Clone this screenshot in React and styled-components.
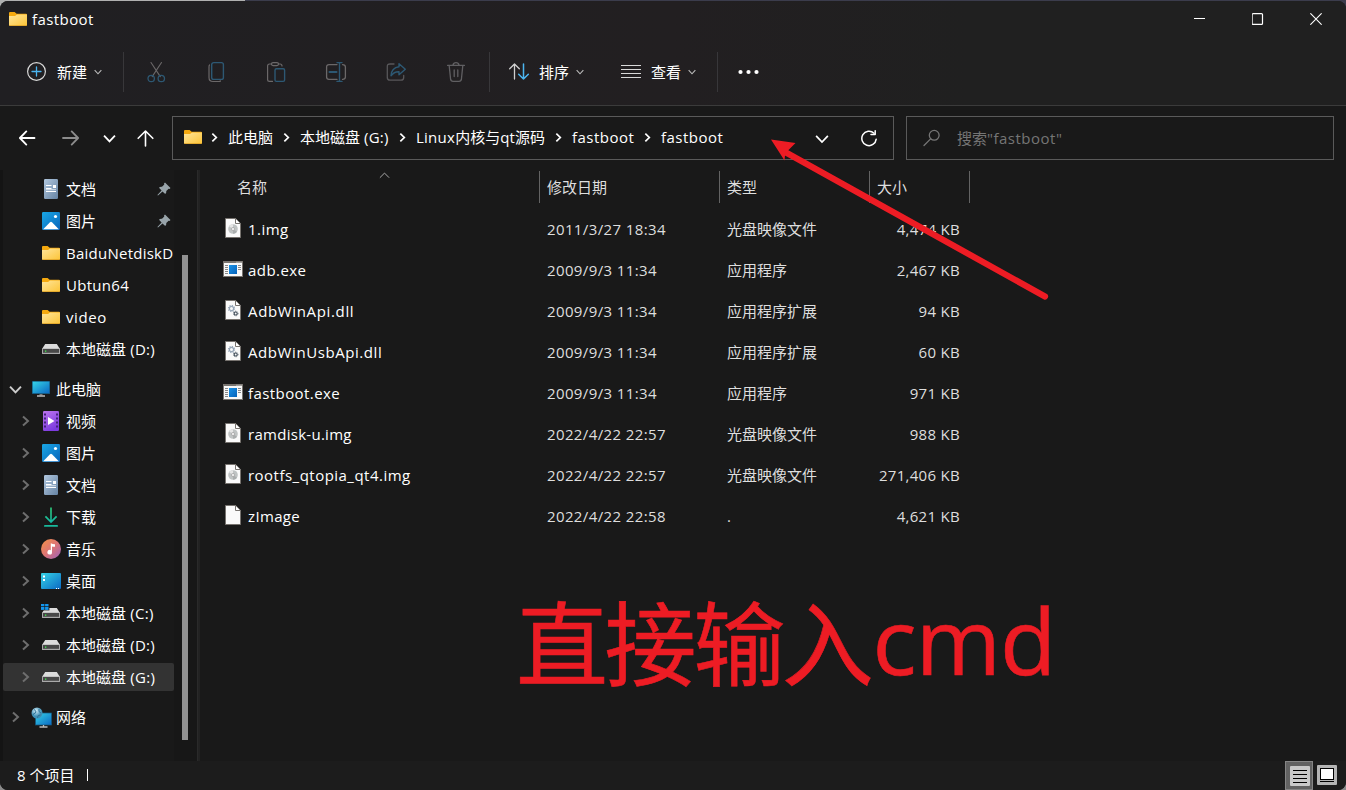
import React from "react";
import styled, { createGlobalStyle } from "styled-components";

const Global = createGlobalStyle`
  *{box-sizing:border-box}
  html,body{margin:0;padding:0;overflow:hidden;background:#191919}
  svg{display:block;flex:none}
`;

const Desktop = styled.div`
  width:1346px;height:790px;overflow:hidden;padding-top:1px;
  background:linear-gradient(#b0b0b0,#b0b0b0) 0 0/245px 12px no-repeat,
    linear-gradient(#3b3c4c,#3b3c4c) 0 0/100% 12px no-repeat,#8a8a8a;
  font-family:"Open Sans","Noto Sans","Noto Sans CJK SC",sans-serif;
  font-size:15px;line-height:20px;color:#fff;
`;
const Window = styled.div`
  position:relative;display:flex;flex-direction:column;
  width:1346px;height:789px;border-radius:8px;overflow:hidden;background:#191919;
`;
const Top = styled.header`
  height:105px;border-bottom:1px solid #3b3b3b;
  background:linear-gradient(90deg,#201f22,#221f21 50%,#202020 72%);
`;
const TitleBar = styled.div`display:flex;align-items:center;height:36px;padding:0 1px 0 9px;`;
const Title = styled.div`flex:1;padding-left:5px;`;
const CaptionButton = styled.div`width:58px;height:36px;display:grid;place-items:center;`;
const Toolbar = styled.div`display:flex;align-items:center;height:69px;`;
const Tool = styled.div`
  display:flex;align-items:center;gap:${p => p.$gap || 0}px;width:${p => p.$w}px;
  padding-left:${p => p.$pl || 0}px;height:40px;
`;
const ToolSep = styled.div`width:1px;height:40px;background:#38373a;`;

const NavBar = styled.div`display:flex;height:64px;padding:10px 12px 10px 0;flex:none;`;
const NavButtons = styled.div`display:flex;width:172px;height:44px;align-items:center;`;
const NavButton = styled.div`width:${p => p.$w}px;padding-left:${p => p.$pl}px;`;
const AddressBox = styled.div`
  display:flex;align-items:center;width:722px;height:44px;border:1px solid #5a5a5a;padding:0 0 2px 11px;
`;
const Crumb = styled.div`width:${p => p.$w}px;white-space:nowrap;`;
const CrumbArrow = styled.div`width:26px;display:flex;justify-content:center;padding-right:1px;`;
const AddressTools = styled.div`display:flex;align-items:center;gap:32px;margin-left:auto;padding:4px 15px 0 0;`;
const SearchBox = styled.div`
  display:flex;align-items:center;gap:16px;flex:1;margin-left:12px;height:44px;border:1px solid #5a5a5a;
  padding:0 0 1px 16px;color:#757575;
`;

const Body = styled.div`display:flex;height:591px;flex:none;`;
const Side = styled.nav`width:197px;border-left:3px solid #141414;display:flex;background:#191919;`;
const Tree = styled.div`display:flex;flex-direction:column;width:171px;padding-top:3px;overflow:hidden;`;
const TreeRow = styled.div`
  display:flex;flex:none;align-items:center;height:28px;margin:2px 0 ${p => (p.$gap ? 10 : 2)}px;
  padding-left:${p => (p.$root ? 6 : 16)}px;white-space:nowrap;border-radius:2px;
  background:${p => (p.$selected ? "#333333" : "transparent")};
`;
const Twist = styled.div`width:21px;height:16px;display:flex;align-items:center;`;
const TreeIcon = styled.div`width:22px;height:22px;display:grid;place-items:center;`;
const TreeLabel = styled.div`flex:1;padding:0 0 1px 4px;`;
const Pin = styled.div`width:17px;`;
const ScrollTrack = styled.div`width:23px;padding:85px 0 0 8px;background:#171717;`;
const Thumb = styled.div`width:6px;height:485px;background:#929292;`;
const Splitter = styled.div`width:3px;background:#222222;border-left:1px solid #2a2a2a;`;

const List = styled.main`flex:1;padding:1px 0 0 21px;`;
const HeaderRow = styled.div`display:flex;height:32px;`;
const HeaderCell = styled.div`
  position:relative;width:${p => p.$w}px;border-right:1px solid #636363;padding:6px 0 0 ${p => p.$pl || 7}px;color:#dedede;
`;
const SortMark = styled.div`position:absolute;left:158px;top:-1px;`;
const FileRow = styled.div`display:flex;align-items:center;height:41px;color:#dedede;`;
const FileIcon = styled.div`width:27px;height:24px;display:flex;align-items:center;padding:0 0 2px ${p => (p.$wide ? 2 : 4)}px;`;
const FileName = styled.div`width:299px;color:#fff;`;
const FileCell = styled.div`width:${p => p.$w}px;text-align:${p => (p.$right ? "right" : "left")};`;
const Files = styled.div`padding-top:5px;`;

const Status = styled.footer`
  display:flex;align-items:center;height:29px;background:#1c1c1c;padding:0 0 0 17px;
`;
const StatusText = styled.div`padding-bottom:2px;`;
const StatusSep = styled.div`width:1px;height:12px;background:#fff;margin:0 0 1px 13px;`;
const ViewButtons = styled.div`display:flex;margin-left:auto;padding-right:5px;`;
const ViewButton = styled.div`
  width:28px;height:29px;display:grid;place-items:center;padding:0 0 ${p => (p.$on ? 0 : 2)}px ${p => (p.$on ? 1 : 0)}px;
  background:${p => (p.$on ? "#626262" : "transparent")};border:1px solid ${p => (p.$on ? "#858585" : "transparent")};
`;

const Latin = styled.span`letter-spacing:${p => (p.$ls === undefined ? 0.42 : p.$ls)}px;`;
const Note = styled.div`
  position:absolute;left:516px;top:576px;display:flex;align-items:baseline;line-height:134px;color:#ed1c24;white-space:nowrap;
`;
const NoteHan = styled.span`font-size:92px;letter-spacing:-3.4px;-webkit-text-stroke:.6px #ed1c24;`;
const NoteLatin = styled.span`font-size:92px;letter-spacing:-.8px;margin:0 0 4px 2px;-webkit-text-stroke:.6px #ed1c24;align-self:flex-start;line-height:126px;`;
const Pointer = styled.svg`position:absolute;left:762px;top:129px;`;

const line = (c = "#fff", w = 1.3) => ({ fill: "none", stroke: c, strokeWidth: w, strokeLinecap: "round", strokeLinejoin: "round" });

const Folder = () => (
  <svg width="18" height="14" viewBox="0 0 18 14">
    <defs><linearGradient id="fo" x1="0" y1="0" x2="1" y2="1"><stop stopColor="#ffe59b" /><stop offset="1" stopColor="#fcc437" /></linearGradient></defs>
    <path d="M0 1Q0 0 1 0H5.6L7.6 1.8H17Q18 1.8 18 2.8V8H0Z" fill="#f5a90f" />
    <path d="M0 4H6L8 2.4H18V13Q18 14 17 14H1Q0 14 0 13Z" fill="url(#fo)" />
    <path d="M0.4 13.6H17.6" stroke="#d99a1c" strokeWidth=".7" />
  </svg>
);
const Doc = () => (
  <svg width="14" height="20" viewBox="0 0 14 20">
    <defs><linearGradient id="dc" x1="0" y1="0" x2="1" y2="1"><stop stopColor="#b2c8df" /><stop offset="1" stopColor="#6583a3" /></linearGradient></defs>
    <rect width="14" height="20" rx="1.2" fill="url(#dc)" />
    <path d="M2 6.5H7.5M2 9.5H7.5M2 12.5H12" stroke="#fff" strokeWidth="1.1" />
    <path d="M2 10.7H12" stroke="#fff" strokeWidth=".7" />
    <rect x="9" y="6" width="3" height="3" fill="#fff" />
  </svg>
);
const Picture = () => (
  <svg width="18" height="18" viewBox="0 0 18 18">
    <defs><linearGradient id="pc" x1="0" y1="0" x2="1" y2="1"><stop stopColor="#19a7e5" /><stop offset="1" stopColor="#0864ba" /></linearGradient></defs>
    <rect width="18" height="18" rx="1.2" fill="url(#pc)" />
    <path d="M1.2 17.2L8 10.2Q9 9.3 10 10.2L16.8 17.2Z" fill="#fff" />
    <circle cx="13.5" cy="4.5" r="1.6" fill="#fff" />
  </svg>
);
const Drive = ({ win }) => (
  <svg width="20" height="18" viewBox="0 0 20 18">
    <path d="M4.2 4H15.8L19 9H1Z" fill="#dcdcdc" />
    <rect x="1" y="8.6" width="18" height="5.4" rx=".6" fill="#aaa" />
    <rect x="2" y="9" width="16" height="3.8" fill="#484848" />
    <rect x="4" y="10.5" width="1.3" height="1.3" fill="#3df04b" />
    {win && <g fill="#1396ee"><rect x="-1" y="-2" width="9.4" height="8.4" fill="#191919" /><rect x="0" y="-1" width="3.4" height="3.2" /><rect x="4.1" y="-1" width="3.4" height="3.2" /><rect x="0" y="2.9" width="3.4" height="3" /><rect x="4.1" y="2.9" width="3.4" height="3" /></g>}
  </svg>
);
const screenFill = (
  <defs><linearGradient id="sc" x1="0" y1="0" x2="1" y2="1"><stop stopColor="#35d3e6" /><stop offset="1" stopColor="#0b69c4" /></linearGradient></defs>
);
const Computer = () => (
  <svg width="18" height="16" viewBox="0 0 18 16">
    {screenFill}
    <rect width="18" height="13" rx=".6" fill="#14587f" /><rect x=".7" y=".7" width="16.6" height="11.4" fill="url(#sc)" />
    <path d="M7.5 13H10.5V14.5H7.5Z" fill="#777" /><path d="M5 15H13" stroke="#c8c8c8" strokeWidth="1.4" />
  </svg>
);
const Video = () => (
  <svg width="16" height="20" viewBox="0 0 16 20">
    <defs><linearGradient id="vd" x1="0" y1="0" x2=".5" y2="1"><stop stopColor="#bd75ee" /><stop offset="1" stopColor="#7d3be0" /></linearGradient></defs>
    <rect width="16" height="20" rx="1.2" fill="url(#vd)" />
    {[2, 6, 10, 14].map(y => <g key={y} fill="#44227c"><rect x="1" y={y + 0.5} width="2" height="2" /><rect x="13" y={y + 0.5} width="2" height="2" /></g>)}
    <path d="M5 6L11.5 10L5 14Z" fill="#fff" />
  </svg>
);
const Download = () => (
  <svg width="16" height="20" viewBox="0 0 16 20">
    <defs><linearGradient id="dl" x1="0" y1="0" x2="0" y2="1"><stop stopColor="#2fd07d" /><stop offset="1" stopColor="#12b5a4" /></linearGradient></defs>
    <path d="M7.2.5H8.8V13L13 8.8L14.2 10L8 16.2L1.8 10L3 8.8L7.2 13Z" fill="url(#dl)" />
    <rect x="1" y="18" width="14" height="1.8" rx=".9" fill="#18b99b" />
  </svg>
);
const Music = () => (
  <svg width="20" height="20" viewBox="0 0 20 20">
    <defs><linearGradient id="mu" x1="0" y1="0" x2="1" y2="1"><stop stopColor="#f59245" /><stop offset=".5" stopColor="#dd7575" /><stop offset="1" stopColor="#9a62c0" /></linearGradient></defs>
    <circle cx="10" cy="10" r="10" fill="url(#mu)" />
    <path d="M9.8 4.3Q12 5.3 14 5.2V7.7Q12.5 8 11 7.4V13A2.3 2.3 0 1 1 9.8 11.2Z" fill="#fff" />
  </svg>
);
const DesktopIcon = () => (
  <svg width="20" height="16" viewBox="0 0 20 16">
    {screenFill}
    <rect width="20" height="16" rx="1" fill="url(#sc)" />
    <path d="M2 2.5H4V4.5H2ZM2 6H4V8H2ZM15 15H16V16H15ZM17 15H18V16H17Z" fill="#fff" />
  </svg>
);
const Network = () => (
  <svg width="21" height="21" viewBox="0 0 21 21">
    {screenFill}
    <defs><radialGradient id="gl" cx=".4" cy=".3"><stop stopColor="#d8eef7" /><stop offset="1" stopColor="#3f8fb5" /></radialGradient></defs>
    <rect x="4.5" y="6" width="16" height="12" fill="url(#sc)" stroke="#14587f" strokeWidth=".7" />
    <path d="M8.5 20H16.5M12.5 18V20" stroke="#bbb" strokeWidth="1.3" />
    <circle cx="6" cy="6" r="5.5" fill="url(#gl)" /><path d="M3 2.5Q6 4 4.5 6Q2 6.5 2 8M8 2Q7 5 10 6M6.5 11Q6 8 9.5 8" fill="none" stroke="#2d7498" strokeWidth="1" />
  </svg>
);
const PinIcon = () => (
  <svg width="14" height="14" viewBox="0 0 14 14">
    <path d="M8 .5L13.5 6L12.5 7L11.6 6.7L9.3 9Q9.6 11 8.2 12L5.5 9.4L1 13.6L.4 13L4.6 8.5L2 5.8Q3 4.4 5 4.7L7.3 2.4L7 1.5Z" fill="#98a4aa" />
  </svg>
);
const Chevron = ({ d = "right", s = 8, c = "#fff", w = 1.5 }) => {
  const paths = { right: "M2.6 0.8L7 5L2.6 9.2", down: "M0.8 2.8L5 7.2L9.2 2.8", up: "M0.8 7L5 2.8L9.2 7" };
  return <svg width={s} height={s} viewBox="0 0 10 10"><path d={paths[d]} {...line(c, (w * 10) / s)} strokeLinecap="butt" strokeLinejoin="miter" /></svg>;
};
const TreeChevron = () => <svg width="13" height="14"><path d="M4 2.5L9 7L4 11.5" {...line("#6e6e6e", 2)} strokeLinecap="butt" strokeLinejoin="miter" /></svg>;
const Sheet = ({ kind }) => (
  <svg width="16" height="20" viewBox="0 0 16 20">
    <path d="M.5.5H10.6L15.5 5.4V19.5H.5Z" fill="#fafafa" stroke="#77736f" />
    <path d="M10.5.8V5.5H15.2" fill="#fff" stroke="#77736f" />
    {kind === "img" && <g><circle cx="8" cy="11" r="4.8" fill="#bfc3c3" /><path d="M8 11L4 8.3A4.8 4.8 0 0 1 8 6.2Z" fill="#e5e5e5" /><path d="M8 11L12 13.7A4.8 4.8 0 0 1 8 15.8Z" fill="#a9adad" /><circle cx="8" cy="11" r="1.6" fill="#eee" stroke="#999" strokeWidth=".6" /></g>}
    {kind === "dll" && <g fill="none"><circle cx="6.5" cy="8.5" r="2.1" stroke="#98a7b8" strokeWidth="1.2" /><circle cx="6.5" cy="8.5" r="3.1" stroke="#98a7b8" strokeWidth="1.1" strokeDasharray="1.2 1.23" /><circle cx="10.7" cy="13.5" r="1.5" stroke="#46525e" strokeWidth="1.1" /><circle cx="10.7" cy="13.5" r="2.3" stroke="#46525e" strokeWidth=".9" strokeDasharray=".9 .9" /></g>}
  </svg>
);
const AppIcon = () => (
  <svg width="20" height="16" viewBox="0 0 20 16">
    <defs><linearGradient id="ap" x1="0" y1="0" x2="1" y2="1"><stop stopColor="#1a93e8" /><stop offset="1" stopColor="#0562ba" /></linearGradient></defs>
    <rect x=".5" y=".5" width="19" height="15" fill="#f8f8f8" stroke="#77736f" />
    <rect width="20" height="2" fill="#77736f" />
    <path d="M13.5 1.3H14.5M15.5 1.3H16.5M17.5 1.3H18.5" stroke="#ddd" />
    <rect x="6" y="4" width="8" height="9" fill="url(#ap)" />
    <path d="M2 4.5H5M2 6.5H5M2 8.5H5M2 10.5H5M2 12.5H5M15 4.5H18M15 6.5H18M15 8.5H18" stroke="#888" />
  </svg>
);

const Cut = () => <svg width="60" height="24" viewBox="0 0 60 24"><g transform="translate(3.5 2)"><path d="M3.5.5L12.8 14.6M14 .5L4.7 14.6" {...line("#6b6869", 1.1)} /><circle cx="3.7" cy="16.5" r="3.2" {...line("#2d5873", 1.3)} /><circle cx="13.8" cy="16.5" r="3.2" {...line("#2d5873", 1.3)} /></g></svg>;
const Copy = () => <svg width="60" height="24"><g transform="translate(4.5 2)"><path d="M1 3Q.5 3.5 .5 5V15.5Q.5 19.5 4.5 19.5H10.5Q11.5 19.5 12 19" {...line("#6b6869", 1.2)} /><rect x="3.2" y=".6" width="11.7" height="16.8" rx="2" {...line("#2d5873", 1.4)} /></g></svg>;
const Paste = () => <svg width="60" height="24"><g transform="translate(3 2)"><path d="M4.5 2H2.5Q.6 2 .6 4V17.5Q.6 19.4 2.5 19.4H5.5M11.5 2H13Q15 2 15 4" {...line("#6b6869", 1.2)} /><rect x="4.5" y=".6" width="7" height="3" rx="1.5" {...line("#6b6869", 1.2)} /><rect x="8" y="6.8" width="9.6" height="12.6" rx="1.4" {...line("#2d5873", 1.4)} /></g></svg>;
const Rename = () => <svg width="60" height="24"><g transform="translate(2 2)"><path d="M11 2.6H3Q.6 2.6 .6 5V15Q.6 17.4 3 17.4H11M16.5 2.6Q19.4 2.6 19.4 5V15Q19.4 17.4 16.5 17.4" {...line("#6b6869", 1.3)} /><path d="M13.5 .6V19.4M11 .6H16M11 19.4H16" {...line("#2d5873", 1.4)} /><path d="M3.5 10H10.5" {...line("#2d5873", 2)} /></g></svg>;
const Share = () => <svg width="60" height="24"><g transform="translate(2.5 3)"><path d="M7.5 1H3.5Q.8 1 .8 3.5V14.5Q.8 17.2 3.5 17.2H14.5Q17.2 17.2 17.2 14.5V12.5" {...line("#58575a", 1.3)} /><path d="M12.5 .7L18.8 6.2L12.5 11.8V8.7Q7.5 8.5 4.5 12.8Q5 4.8 12.5 3.8Z" {...line("#2d5873", 1.4)} /></g></svg>;
const Trash = () => <svg width="32" height="24"><g transform="translate(3 2)"><path d="M.6 3.4H17.4M6 3Q6.5 .7 9 .7Q11.5 .7 12 3M2.2 3.6L3.6 17.2Q3.9 19.4 6 19.4H12Q14.1 19.4 14.4 17.2L15.8 3.6M7.2 8V14.5M10.8 8V14.5" {...line("#605f62", 1.3)} /></g></svg>;

const side = [
  [<Doc />, "文档", { pin: 1 }], [<Picture />, "图片", { pin: 1 }],
  [<Folder />, <Latin $ls={0.25}>BaiduNetdiskD</Latin>, {}], [<Folder />, <Latin $ls={0.3}>Ubtun64</Latin>, {}], [<Folder />, <Latin $ls={0.6}>video</Latin>, {}],
  [<Drive />, <>本地磁盘<Latin $ls={0.3}> (D:)</Latin></>, { gap: 1 }],
  [<Computer />, "此电脑", { root: 1, open: 1 }],
  [<Video />, "视频", { t: 1 }], [<Picture />, "图片", { t: 1 }], [<Doc />, "文档", { t: 1 }], [<Download />, "下载", { t: 1 }],
  [<Music />, "音乐", { t: 1 }], [<DesktopIcon />, "桌面", { t: 1 }], [<Drive win />, <>本地磁盘<Latin $ls={0.3}> (C:)</Latin></>, { t: 1 }],
  [<Drive />, <>本地磁盘<Latin $ls={0.3}> (D:)</Latin></>, { t: 1 }], [<Drive />, <>本地磁盘<Latin $ls={0.3}> (G:)</Latin></>, { t: 1, sel: 1, gap: 1 }],
  [<Network />, "网络", { root: 1, t: 1 }],
];
const files = [
  ["img", "1.img", "2011/3/27 18:34", "光盘映像文件", "4,474 KB", 0.45],
  ["exe", "adb.exe", "2009/9/3 11:34", "应用程序", "2,467 KB", 0.45],
  ["dll", "AdbWinApi.dll", "2009/9/3 11:34", "应用程序扩展", "94 KB", 0.65],
  ["dll", "AdbWinUsbApi.dll", "2009/9/3 11:34", "应用程序扩展", "60 KB", 0.58],
  ["exe", "fastboot.exe", "2009/9/3 11:34", "应用程序", "971 KB", 0.42],
  ["img", "ramdisk-u.img", "2022/4/22 22:57", "光盘映像文件", "988 KB", 0.28],
  ["img", "rootfs_qtopia_qt4.img", "2022/4/22 22:57", "光盘映像文件", "271,406 KB", 0.48],
  ["", "zImage", "2022/4/22 22:58", ".", "4,621 KB", 0.35],
];

export default function App() {
  return (
    <Desktop>
      <Global />
      <Window>
        <Top>
          <TitleBar>
            <Folder />
            <Title><Latin>fastboot</Latin></Title>
            <CaptionButton><svg width="12" height="12"><path d="M0 5.5H11" stroke="#fff" /></svg></CaptionButton>
            <CaptionButton><svg width="12" height="12"><rect x=".1" y=".6" width="10.4" height="10.8" rx="1" {...line("#fff", 1.2)} /></svg></CaptionButton>
            <CaptionButton><svg width="12" height="12"><path d="M.7 .7L11.3 11.3M11.3 .7L.7 11.3" {...line("#fff", 1.1)} /></svg></CaptionButton>
          </TitleBar>
          <Toolbar>
            <Tool $w={123} $pl={27}>
              <svg width="30" height="20"><circle cx="9.5" cy="9.5" r="8.9" {...line("#d8d8d8", 1.2)} /><path d="M9.5 5V14M5 9.5H14" {...line("#4cb5f0", 1.3)} /></svg>
              <Tool $gap={7}><span>新建</span><Chevron d="down" s={8} c="#bbb" w={1.1} /></Tool>
            </Tool>
            <ToolSep />
            <Tool $w={365} $pl={20}><Cut /><Copy /><Paste /><Rename /><Share /><Trash /></Tool>
            <ToolSep />
            <Tool $w={131} $pl={19} $gap={9}>
              <svg width="21" height="17"><path d="M5.5 16V1M.7 5.8L5.5 1L10.3 5.8" {...line("#d0d0d0", 1.3)} /><path d="M14.5 1V16M9.7 11.2L14.5 16L19.3 11.2" {...line("#4cb5f0", 1.5)} /></svg>
              <Tool $gap={7}><span>排序</span><Chevron d="down" s={8} c="#bbb" w={1.1} /></Tool>
            </Tool>
            <Tool $w={96} $gap={9}>
              <svg width="21" height="14"><path d="M0 .5H20M0 4.5H20M0 8.5H20M0 12.5H20" stroke="#d8d8d8" strokeWidth="1" /></svg>
              <Tool $gap={7}><span>查看</span><Chevron d="down" s={8} c="#bbb" w={1.1} /></Tool>
            </Tool>
            <ToolSep />
            <Tool $pl={20}><svg width="22" height="6"><circle cx="2.5" cy="3" r="2.1" fill="#fff" /><circle cx="10.5" cy="3" r="2.1" fill="#fff" /><circle cx="18.5" cy="3" r="2.1" fill="#fff" /></svg></Tool>
          </Toolbar>
        </Top>
        <NavBar>
          <NavButtons>
            <NavButton $w={62} $pl={19}><svg width="17" height="16"><path d="M15.5 8H1M7.3 1.4L.9 8L7.3 14.6" {...line("#fff", 1.8)} /></svg></NavButton>
            <NavButton $w={41} $pl={0}><svg width="17" height="16"><path d="M1 8H16M9.7 1.4L16.1 8L9.7 14.6" {...line("#8c8c8c", 1.8)} /></svg></NavButton>
            <NavButton $w={34} $pl={0}><Chevron d="down" s={13} w={1.8} /></NavButton>
            <NavButton $w={30} $pl={0}><svg width="17" height="17"><path d="M8.5 16V1M1.2 8.3L8.5 1L15.8 8.3" {...line("#fff", 1.6)} /></svg></NavButton>
          </NavButtons>
          <AddressBox>
            <Folder />
            <CrumbArrow><Chevron s={9} w={1.7} /></CrumbArrow>
            <Crumb $w={46}>此电脑</Crumb>
            <CrumbArrow><Chevron s={9} w={1.7} /></CrumbArrow>
            <Crumb $w={90}>本地磁盘<Latin $ls={0.2}> (G:)</Latin></Crumb>
            <CrumbArrow><Chevron s={9} w={1.7} /></CrumbArrow>
            <Crumb $w={130}><Latin $ls={0.25}>Linux</Latin>内核与<Latin $ls={0.2}>qt</Latin>源码</Crumb>
            <CrumbArrow><Chevron s={9} w={1.7} /></CrumbArrow>
            <Crumb $w={63}><Latin $ls={0.48}>fastboot</Latin></Crumb>
            <CrumbArrow><Chevron s={9} w={1.7} /></CrumbArrow>
            <Crumb><Latin $ls={0.48}>fastboot</Latin></Crumb>
            <AddressTools>
              <Chevron d="down" s={14} w={1.7} />
              <svg width="17" height="18"><path d="M13 3.2A7.2 7.2 0 1 0 15.2 9.2" {...line("#fff", 1.5)} /><path d="M14.2 .8V4.6H10" {...line("#fff", 1.5)} /></svg>
            </AddressTools>
          </AddressBox>
          <SearchBox>
            <svg width="18" height="18"><circle cx="11.2" cy="6.3" r="4.9" {...line("#757575", 1.3)} /><path d="M7.6 9.9L1 16.5" {...line("#757575", 1.3)} /></svg>
            <span>搜索<Latin $ls={0.5}>"fastboot"</Latin></span>
          </SearchBox>
        </NavBar>
        <Body>
          <Side>
            <Tree>
              {side.map(([icon, label, o], i) => (
                <TreeRow key={i} $root={o.root} $gap={o.gap} $selected={o.sel}>
                  <Twist>
                    {o.open && <Chevron d="down" s={13} c="#ccc" w={2} />}
                    {o.t && <TreeChevron />}
                  </Twist>
                  <TreeIcon>{icon}</TreeIcon>
                  <TreeLabel>{label}</TreeLabel>
                  {o.pin && <Pin><PinIcon /></Pin>}
                </TreeRow>
              ))}
            </Tree>
            <ScrollTrack><Thumb /></ScrollTrack>
          </Side>
          <Splitter />
          <List>
            <HeaderRow>
              <HeaderCell $w={319} $pl={16}>名称<SortMark><Chevron d="up" s={11} c="#a8a8a8" w={1} /></SortMark></HeaderCell>
              <HeaderCell $w={180}>修改日期</HeaderCell>
              <HeaderCell $w={150}>类型</HeaderCell>
              <HeaderCell $w={100}>大小</HeaderCell>
            </HeaderRow>
            <Files>
              {files.map(([kind, name, date, type, size, ls]) => (
                <FileRow key={name}>
                  <FileIcon $wide={kind === "exe"}>{kind === "exe" ? <AppIcon /> : <Sheet kind={kind} />}</FileIcon>
                  <FileName><Latin $ls={ls}>{name}</Latin></FileName>
                  <FileCell $w={180}><Latin $ls={0.38}>{date}</Latin></FileCell>
                  <FileCell $w={133}>{type}</FileCell>
                  <FileCell $w={100} $right><Latin $ls={0.3}>{size}</Latin></FileCell>
                </FileRow>
              ))}
            </Files>
          </List>
        </Body>
        <Status>
          <StatusText>8 个项目</StatusText><StatusSep />
          <ViewButtons>
            <ViewButton $on><svg width="20" height="20"><rect width="20" height="20" rx="1" fill="#c9c9c9" /><path d="M3 4.5H17M3 8.5H17M3 12.5H17M3 16.5H17" stroke="#000" /></svg></ViewButton>
            <ViewButton><svg width="20" height="20"><rect width="20" height="20" rx="1" fill="#b4b4b4" /><rect x="3.5" y="3.5" width="13" height="11" fill="#fff" stroke="#000" /><path d="M3 16.5H17" stroke="#000" /></svg></ViewButton>
          </ViewButtons>
        </Status>
        <Note><NoteHan>直接输入</NoteHan><NoteLatin>cmd</NoteLatin></Note>
        <Pointer width="300" height="180" viewBox="762 130 300 180">
          <path d="M786 152.5L1045 296.5" stroke="#ed1c24" strokeWidth="6.2" strokeLinecap="round" />
          <path d="M771 139.5L795.5 143L788.5 150L785 155.5L784.5 160.5Z" fill="#ed1c24" />
        </Pointer>
      </Window>
    </Desktop>
  );
}
